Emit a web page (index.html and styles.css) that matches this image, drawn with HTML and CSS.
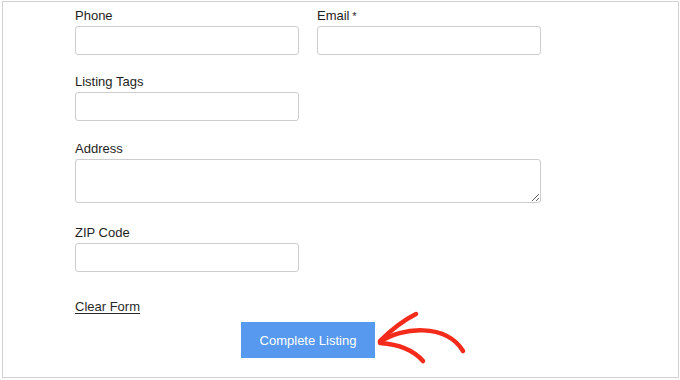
FILE: index.html
```html
<!DOCTYPE html>
<html lang="en">
<head>
<meta charset="utf-8">
<title>Listing Form</title>
<link rel="stylesheet" href="styles.css">
</head>
<body>
<div class="frame">
  <form class="form">
    <div class="row">
      <div class="field">
        <label class="label" for="phone">Phone</label>
        <input class="input" id="phone" type="text">
      </div>
      <div class="field">
        <label class="label" for="email">Email <span class="req">*</span></label>
        <input class="input" id="email" type="text">
      </div>
    </div>
    <div class="field gap-20">
      <label class="label" for="tags">Listing Tags</label>
      <input class="input" id="tags" type="text">
    </div>
    <div class="field gap-22">
      <label class="label" for="address">Address</label>
      <textarea class="textarea" id="address"></textarea>
    </div>
    <div class="field gap-27">
      <label class="label" for="zip">ZIP Code</label>
      <input class="input" id="zip" type="text">
    </div>
    <div class="clear-row"><a class="clear" href="#">Clear Form</a></div>
    <div class="submit-row">
      <button class="submit" type="button">Complete Listing</button>
    </div>
  </form>
  <svg class="arrow" width="110" height="70" viewBox="0 0 110 70" aria-hidden="true">
    <path d="M9,41 C30,26 75,22 92,50" />
    <path d="M9,40 Q27,22 45,13" />
    <path d="M9,42 Q38,44 52,60" />
  </svg>
</div>
</body>
</html>
```

FILE: styles.css
```css
* { box-sizing: border-box; }

html, body {
  margin: 0;
  padding: 0;
  background: #ffffff;
}

body {
  width: 680px;
  height: 380px;
  overflow: hidden;
  font-family: "Liberation Sans", Arial, sans-serif;
  color: #222222;
}

.frame {
  position: relative;
  margin: 1px 0 0 2px;
  width: 677px;
  height: 377px;
  border: 1px solid #d2d2d2;
  padding: 6px 0 0 72px;
}

.form {
  width: 466px;
  display: flex;
  flex-direction: column;
}

.row {
  display: grid;
  grid-template-columns: 224px 224px;
  column-gap: 18px;
  margin-bottom: 19px;
}

.field {
  display: flex;
  flex-direction: column;
  align-items: flex-start;
}

.gap-20 { margin-bottom: 20px; }
.gap-22 { margin-bottom: 22px; }
.gap-27 { margin-bottom: 27px; }

.label {
  font-size: 13px;
  line-height: 16px;
  margin-bottom: 2px;
  color: #1e1e1e;
}

.req {
  font-size: 11px;
  margin-left: -1px;
}

.input {
  display: block;
  width: 224px;
  height: 29px;
  margin: 0;
  border: 1px solid #cdcdcd;
  border-radius: 3px;
  background: #ffffff;
  font: 13px "Liberation Sans", Arial, sans-serif;
  padding: 0 8px;
}

.textarea {
  display: block;
  width: 466px;
  height: 44px;
  margin: 0;
  border: 1px solid #cdcdcd;
  border-radius: 3px;
  background: #ffffff;
  font: 13px "Liberation Sans", Arial, sans-serif;
  padding: 6px 8px;
}

.clear-row {
  font-size: 13px;
  line-height: 16px;
}

.clear {
  color: #2a2a2a;
  text-decoration: underline;
  text-underline-offset: 2px;
  text-decoration-thickness: 1px;
}

.submit-row {
  display: flex;
  justify-content: center;
  margin-top: 7px;
}

.submit {
  width: 134px;
  height: 36px;
  margin: 0;
  border: none;
  background: #5799ef;
  color: #ffffff;
  font: 13px "Liberation Sans", Arial, sans-serif;
  cursor: pointer;
}

.arrow {
  position: absolute;
  left: 368px;
  top: 299px;
  overflow: visible;
}

.arrow path {
  fill: none;
  stroke: #f42a1b;
  stroke-width: 4.5;
  stroke-linecap: round;
  stroke-linejoin: round;
}
```
